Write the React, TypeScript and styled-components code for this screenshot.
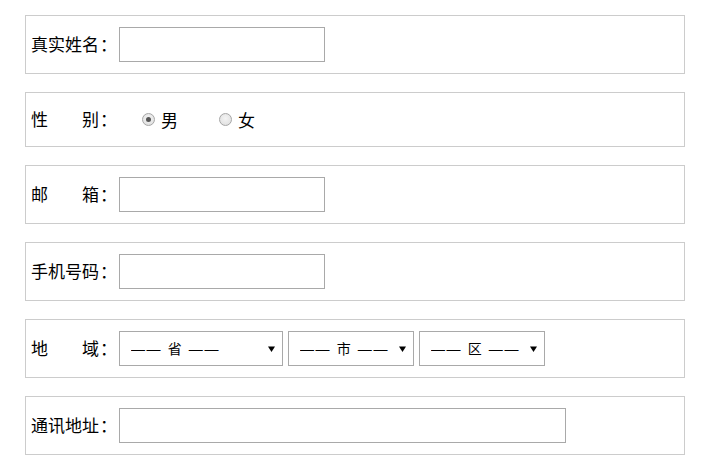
import React from 'react';
import styled, { createGlobalStyle } from 'styled-components';

const GlobalStyle = createGlobalStyle`
  html, body {
    margin: 0;
    padding: 0;
    background: #ffffff;
  }
  body {
    font-family: "Microsoft YaHei", "Noto Sans CJK SC", "Liberation Sans", sans-serif;
    color: #000000;
  }
`;

const arrow =
  "data:image/svg+xml;utf8," +
  encodeURIComponent(
    '<svg xmlns="http://www.w3.org/2000/svg" width="7" height="6" viewBox="0 0 7 6"><path d="M0 0.5H7L3.5 6Z" fill="#000"/></svg>'
  );

const Form = styled.form`
  display: flex;
  flex-direction: column;
  gap: 18px;
  width: 660px;
  padding: 15px 0 0 25px;
`;

const Row = styled.div<{ $short?: boolean }>`
  box-sizing: border-box;
  height: ${({ $short }) => ($short ? '55px' : '59px')};
  border: 1px solid #cccccc;
  display: flex;
  align-items: center;
  padding: 0 5px;
`;

const Label = styled.label`
  display: flex;
  align-items: center;
  font-size: 17px;
  line-height: 20px;
  margin-top: -1px;
`;

const LabelText = styled.span`
  display: flex;
  justify-content: space-between;
  width: 68px;
`;

const Colon = styled.span`
  box-sizing: border-box;
  width: 20px;
  padding-left: 1px;
`;

const TextInput = styled.input<{ $width: number }>`
  box-sizing: border-box;
  width: ${({ $width }) => $width}px;
  height: 35px;
  margin: 0;
  border: 1px solid #a9a9a9;
  padding: 0 6px;
  font-size: 14px;
  outline: none;
`;

const RadioGroup = styled.div`
  display: flex;
  align-items: center;
  gap: 41px;
  margin-left: 23px;
`;

const RadioOption = styled.label`
  display: flex;
  align-items: center;
  gap: 6px;
  font-size: 17px;
`;

const Radio = styled.input`
  appearance: none;
  box-sizing: border-box;
  width: 13px;
  height: 13px;
  margin: 0;
  border-radius: 50%;
  border: 1px solid #a6a6a6;
  background: radial-gradient(circle at 50% 40%, #f4f4f4 0%, #dcdcdc 100%);
  position: relative;

  &:checked::after {
    content: '';
    position: absolute;
    left: 3px;
    top: 3px;
    width: 5px;
    height: 5px;
    border-radius: 50%;
    background: #555555;
  }
`;

const Selects = styled.div`
  display: flex;
  gap: 5px;
`;

const Select = styled.select<{ $width: number }>`
  appearance: none;
  box-sizing: border-box;
  width: ${({ $width }) => $width}px;
  height: 35px;
  margin: 0;
  border: 1px solid #a9a9a9;
  border-radius: 0;
  padding: 0 0 0 11px;
  background: #ffffff url("${arrow}") no-repeat right 7px center;
  font-family: "Liberation Sans", "Noto Sans CJK SC", sans-serif;
  font-size: 14px;
  letter-spacing: 1.6px;
  color: #000000;
  outline: none;
`;

const FieldLabel: React.FC<{ text: string }> = ({ text }) => (
  <Label>
    <LabelText>
      {text.split('').map((ch, i) => (
        <span key={i}>{ch}</span>
      ))}
    </LabelText>
    <Colon>：</Colon>
  </Label>
);

export default function App() {
  return (
    <>
      <GlobalStyle />
      <Form>
        <Row>
          <FieldLabel text="真实姓名" />
          <TextInput type="text" $width={206} />
        </Row>
        <Row $short>
          <FieldLabel text="性别" />
          <RadioGroup>
            <RadioOption>
              <Radio type="radio" name="sex" defaultChecked />
              男
            </RadioOption>
            <RadioOption>
              <Radio type="radio" name="sex" />
              女
            </RadioOption>
          </RadioGroup>
        </Row>
        <Row>
          <FieldLabel text="邮箱" />
          <TextInput type="text" $width={206} />
        </Row>
        <Row>
          <FieldLabel text="手机号码" />
          <TextInput type="text" $width={206} />
        </Row>
        <Row>
          <FieldLabel text="地域" />
          <Selects>
            <Select $width={164}>
              <option>—— 省 ——</option>
            </Select>
            <Select $width={126}>
              <option>—— 市 ——</option>
            </Select>
            <Select $width={126}>
              <option>—— 区 ——</option>
            </Select>
          </Selects>
        </Row>
        <Row>
          <FieldLabel text="通讯地址" />
          <TextInput type="text" $width={447} />
        </Row>
      </Form>
    </>
  );
}
